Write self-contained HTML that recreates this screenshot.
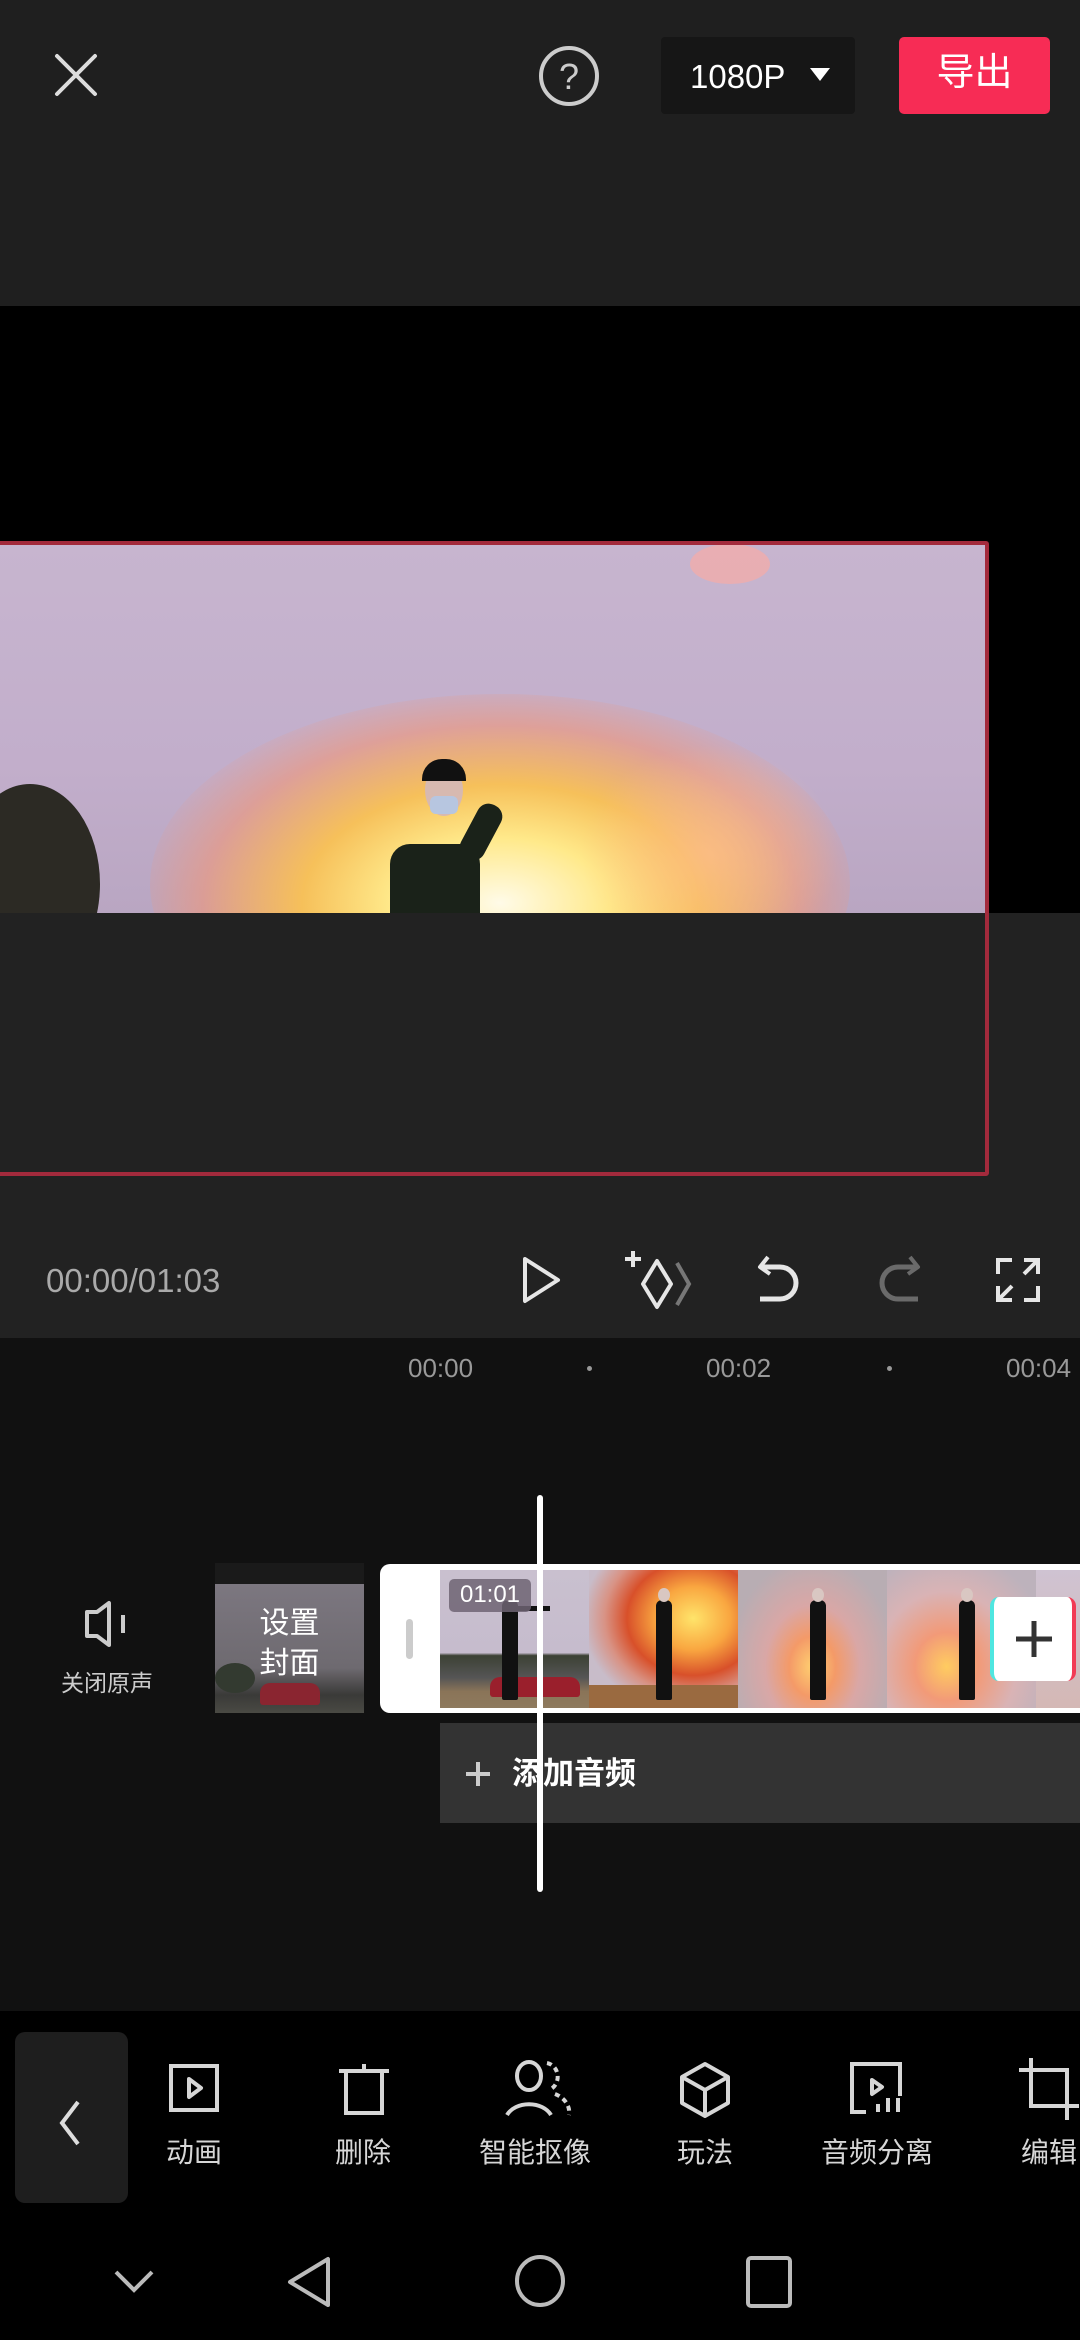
<!DOCTYPE html>
<html><head><meta charset="utf-8"><style>
*{margin:0;padding:0;box-sizing:border-box}
html,body{width:1080px;height:2340px;overflow:hidden}
body{background:#000;position:relative;font-family:"Liberation Sans","Noto Sans CJK SC",sans-serif}
.a{position:absolute}
.t{position:absolute;white-space:nowrap;line-height:1}
svg{position:absolute;overflow:visible}
.thumb{position:absolute;top:1570px;height:138px;width:149px;overflow:hidden}
.fig{position:absolute;width:16px;height:70px;background:#111;border-radius:6px 6px 2px 2px}
.head{position:absolute;width:12px;height:14px;border-radius:50%;background:#d9c7c2}
.lbl{position:absolute;top:109px;font-size:28px;color:#d6d6d6;text-align:center;width:200px;line-height:1}
</style></head><body>
<!-- top bar -->
<div class="a" style="left:0;top:0;width:1080px;height:306px;background:#1f1f1f"></div>
<svg style="left:55px;top:54px" width="42" height="42"><path d="M2 2L40 40M40 2L2 40" stroke="#ddd" stroke-width="4" stroke-linecap="round"/></svg>
<svg style="left:538px;top:45px" width="62" height="62"><circle cx="31" cy="31" r="28" fill="none" stroke="#ccc" stroke-width="4"/><text x="31" y="44" text-anchor="middle" font-size="36" fill="#ccc" font-family="Liberation Sans">?</text></svg>
<div class="a" style="left:661px;top:37px;width:194px;height:77px;background:#161616;border-radius:4px"></div>
<div class="t" style="left:690px;top:60px;font-size:33px;color:#fff">1080P</div>
<svg style="left:810px;top:68px" width="20" height="14"><path d="M0 0H20L10 13Z" fill="#fff"/></svg>
<div class="a" style="left:899px;top:37px;width:151px;height:77px;background:#f72c55;border-radius:5px"></div>
<div class="t" style="left:899px;top:54px;width:151px;text-align:center;font-size:38px;color:#fff">导出</div>

<!-- preview -->
<div class="a" style="left:0;top:913px;width:1080px;height:425px;background:#222"></div>
<div class="a" style="left:0;top:544px;width:985px;height:369px;overflow:hidden;background:linear-gradient(180deg,#c7b5cf 0%,#c2aecb 60%,#b9a6c2 100%)">
  <div class="a" style="left:150px;top:150px;width:700px;height:380px;border-radius:50%;background:radial-gradient(ellipse at 50% 55%,#fffbe8 0%,#ffe98a 22%,#f6c05a 40%,rgba(240,150,120,.6) 60%,rgba(200,170,200,0) 75%)"></div>
  <div class="a" style="left:580px;top:200px;width:260px;height:220px;border-radius:50%;background:radial-gradient(ellipse,rgba(255,190,140,.7),rgba(200,170,200,0) 70%)"></div>
  <div class="a" style="left:-40px;top:240px;width:140px;height:200px;border-radius:50%;background:#2c2a24"></div>
  <div class="a" style="left:690px;top:0px;width:80px;height:40px;border-radius:50%;background:rgba(255,170,160,.6)"></div>
  <div class="a" style="left:390px;top:300px;width:90px;height:90px;border-radius:20px 20px 0 0;background:#1a2219"></div>
  <div class="a" style="left:468px;top:258px;width:26px;height:60px;background:#1a2219;border-radius:12px;transform:rotate(28deg)"></div>
  <div class="a" style="left:425px;top:220px;width:38px;height:52px;border-radius:50%;background:#d7b9b0"></div>
  <div class="a" style="left:422px;top:215px;width:44px;height:22px;border-radius:20px 20px 0 0;background:#111"></div>
  <div class="a" style="left:430px;top:252px;width:28px;height:18px;border-radius:6px;background:#b7c6e0"></div>
</div>
<div class="a" style="left:-4px;top:541px;width:993px;height:635px;border:4px solid #a32a3c;border-radius:3px"></div>

<!-- controls -->
<div class="t" style="left:46px;top:1264px;font-size:33px;color:#aaa">00:00/01:03</div>
<svg style="left:522px;top:1256px" width="40" height="48"><path d="M3 3L36 24L3 45Z" fill="none" stroke="#e6e6e6" stroke-width="4" stroke-linejoin="round"/></svg>
<svg style="left:623px;top:1249px" width="70" height="62"><path d="M10 2V18M2 10H18" stroke="#e6e6e6" stroke-width="4"/><path d="M34 12L48 35L34 58L20 35Z" fill="none" stroke="#e6e6e6" stroke-width="4" stroke-linejoin="round"/><path d="M54 14L66 35L54 56" fill="none" stroke="#777" stroke-width="4"/></svg>
<svg style="left:756px;top:1254px" width="46" height="52"><path d="M12 3L4 13L14 20" fill="none" stroke="#e6e6e6" stroke-width="4" stroke-linejoin="round"/><path d="M6 13H24A16 16 0 0 1 24 45H4" fill="none" stroke="#e6e6e6" stroke-width="5"/></svg>
<svg style="left:876px;top:1254px" width="46" height="52"><path d="M34 3L42 13L32 20" fill="none" stroke="#6a6a6a" stroke-width="4" stroke-linejoin="round"/><path d="M40 13H22A16 16 0 0 0 22 45H42" fill="none" stroke="#6a6a6a" stroke-width="5"/></svg>
<svg style="left:996px;top:1258px" width="44" height="44"><path d="M2 16V2H16M28 42H42V28M2 28V42H16M28 2H42V16M42 2L28 16M2 42L16 28" fill="none" stroke="#e6e6e6" stroke-width="4"/></svg>

<!-- timeline -->
<div class="a" style="left:0;top:1338px;width:1080px;height:673px;background:#111"></div>
<div class="t" style="left:408px;top:1355px;font-size:26px;color:#999">00:00</div>
<div class="a" style="left:587px;top:1366px;width:5px;height:5px;border-radius:50%;background:#999"></div>
<div class="t" style="left:706px;top:1355px;font-size:26px;color:#999">00:02</div>
<div class="a" style="left:887px;top:1366px;width:5px;height:5px;border-radius:50%;background:#999"></div>
<div class="t" style="left:1006px;top:1355px;font-size:26px;color:#999">00:04</div>

<svg style="left:84px;top:1600px" width="46" height="48"><path d="M3 12H13L25 3V45L13 36H3Z" fill="none" stroke="#ccc" stroke-width="4" stroke-linejoin="round"/><path d="M39 15V33" stroke="#ccc" stroke-width="4"/></svg>
<div class="t" style="left:57px;top:1672px;width:100px;text-align:center;font-size:23px;color:#ccc">关闭原声</div>

<div class="a" style="left:215px;top:1563px;width:149px;height:150px;background:linear-gradient(180deg,#1a1a1a 0,#1a1a1a 14%,#7c7780 14%,#6e6a70 70%,#3a3a38 88%,#4a4a44 100%);overflow:hidden">
  <div class="a" style="left:45px;top:120px;width:60px;height:22px;border-radius:10px 10px 3px 3px;background:#8a2530"></div>
  <div class="a" style="left:0;top:100px;width:40px;height:30px;border-radius:50%;background:#333a30"></div>
</div>
<div class="t" style="left:215px;top:1604px;width:149px;text-align:center;font-size:30px;color:#fff;line-height:40px;white-space:normal">设置<br>封面</div>

<div class="a" style="left:380px;top:1564px;width:700px;height:149px;background:#fff;border-radius:10px 0 0 10px"></div>
<div class="a" style="left:406px;top:1619px;width:7px;height:40px;background:#ccc;border-radius:4px"></div>
<div class="thumb" style="left:440px;background:linear-gradient(180deg,#c9c0cf 0%,#c6bccd 60%,#3c4134 62%,#555 78%,#8a7458 88%,#8e7a5e 100%)">
  <div class="a" style="left:50px;top:107px;width:90px;height:20px;border-radius:10px 10px 3px 3px;background:#9a1f2c"></div>
</div>
<div class="thumb" style="left:589px;background:radial-gradient(ellipse at 70% 35%,#ffe46a 0,#f9a640 25%,#d8502a 45%,rgba(200,100,80,.7) 60%,#c8bcc9 75%)"><div class="a" style="left:0;top:115px;width:149px;height:23px;background:#9a6a40"></div></div>
<div class="thumb" style="left:738px;background:radial-gradient(ellipse at 50% 70%,#ffd070 0,#f49a68 22%,#d9a7a6 45%,#b8adb3 80%)"></div>
<div class="thumb" style="left:887px;background:radial-gradient(ellipse at 40% 70%,#ffcc60 0,#f29a78 25%,#d9b3b5 55%,#bdb2bc 85%)"></div>
<div class="thumb" style="left:1036px;width:44px;background:linear-gradient(180deg,#cfc3d2,#d4b8b5)"></div>
<div class="fig" style="left:502px;top:1600px;height:100px"></div><div class="head" style="left:504px;top:1588px"></div>
<div class="a" style="left:516px;top:1606px;width:34px;height:5px;background:#111"></div>
<div class="fig" style="left:656px;top:1600px;height:100px"></div><div class="head" style="left:658px;top:1588px"></div>
<div class="fig" style="left:810px;top:1600px;height:100px"></div><div class="head" style="left:812px;top:1588px"></div>
<div class="fig" style="left:959px;top:1600px;height:100px"></div><div class="head" style="left:961px;top:1588px"></div>
<div class="a" style="left:449px;top:1579px;width:82px;height:33px;background:rgba(110,100,115,.85);border-radius:5px"></div>
<div class="t" style="left:449px;top:1583px;width:82px;text-align:center;font-size:24px;color:#fff">01:01</div>
<div class="a" style="left:990px;top:1597px;width:86px;height:84px;background:#fff;border-radius:9px;border-left:4px solid #4fe6e0;border-right:4px solid #f23a55"></div>
<svg style="left:1016px;top:1621px" width="36" height="36"><path d="M18 0V36M0 18H36" stroke="#333" stroke-width="5"/></svg>

<div class="a" style="left:440px;top:1723px;width:640px;height:100px;background:#333"></div>
<svg style="left:466px;top:1762px" width="24" height="24"><path d="M12 0V24M0 12H24" stroke="#ccc" stroke-width="4"/></svg>
<div class="t" style="left:512px;top:1758px;font-size:31px;color:#fff;font-weight:bold">添加音频</div>

<div class="a" style="left:537px;top:1495px;width:6px;height:397px;background:#fff;border-radius:3px"></div>

<!-- toolbar -->
<div class="a" style="left:15px;top:2032px;width:113px;height:171px;background:#1e1e1e;border-radius:10px"></div>
<svg style="left:58px;top:2100px" width="24" height="46"><path d="M20 2L4 23L20 44" fill="none" stroke="#ddd" stroke-width="4"/></svg>
<div class="a" style="left:167px;top:2030px;width:913px;height:180px;overflow:hidden">
<svg style="left:2px;top:34px" width="50" height="48"><rect x="2" y="2" width="46" height="44" fill="none" stroke="#d6d6d6" stroke-width="4"/><path d="M20 15L32 24L20 33Z" fill="none" stroke="#d6d6d6" stroke-width="4" stroke-linejoin="round"/></svg>
<svg style="left:170px;top:32px" width="54" height="53"><path d="M2 9H52M27 2V9M9 9V51H45V9" fill="none" stroke="#d6d6d6" stroke-width="4"/></svg>
<svg style="left:338px;top:30px" width="68" height="56"><ellipse cx="24" cy="16" rx="12" ry="14" fill="none" stroke="#d6d6d6" stroke-width="4"/><path d="M2 55A24 18 0 0 1 46 55" fill="none" stroke="#d6d6d6" stroke-width="4"/><path d="M42 3A13 14 0 0 1 44 30M50 34A24 20 0 0 1 64 55" fill="none" stroke="#d6d6d6" stroke-width="4" stroke-dasharray="5 4"/></svg>
<svg style="left:513px;top:32px" width="50" height="56"><path d="M25 2L48 15V41L25 54L2 41V15Z M2 15L25 28L48 15M25 28V54" fill="none" stroke="#d6d6d6" stroke-width="4" stroke-linejoin="round"/></svg>
<svg style="left:683px;top:32px" width="54" height="52"><path d="M50 34V2H2V50H16" fill="none" stroke="#d6d6d6" stroke-width="4"/><path d="M22 18L32 25L22 32Z" fill="none" stroke="#d6d6d6" stroke-width="4" stroke-linejoin="round"/><path d="M28 42V50M38 36V50M48 36V50" stroke="#d6d6d6" stroke-width="4"/></svg>
<svg style="left:850px;top:28px" width="64" height="64"><path d="M14 0V48H62M2 12H50V62" fill="none" stroke="#d6d6d6" stroke-width="4"/></svg>
<div class="lbl" style="left:-73px">动画</div>
<div class="lbl" style="left:96px">删除</div>
<div class="lbl" style="left:268px">智能抠像</div>
<div class="lbl" style="left:438px">玩法</div>
<div class="lbl" style="left:610px">音频分离</div>
<div class="lbl" style="left:782px">编辑</div>
</div>

<!-- nav -->
<svg style="left:114px;top:2270px" width="40" height="22"><path d="M2 2L20 20L38 2" fill="none" stroke="#bbb" stroke-width="4"/></svg>
<svg style="left:286px;top:2256px" width="48" height="52"><path d="M42 3V49L4 26Z" fill="none" stroke="#bbb" stroke-width="4" stroke-linejoin="round"/></svg>
<svg style="left:514px;top:2254px" width="52" height="54"><ellipse cx="26" cy="27" rx="23" ry="24" fill="none" stroke="#bbb" stroke-width="4"/></svg>
<svg style="left:746px;top:2256px" width="46" height="52"><rect x="2" y="2" width="42" height="48" rx="3" fill="none" stroke="#bbb" stroke-width="4"/></svg>
</body></html>
